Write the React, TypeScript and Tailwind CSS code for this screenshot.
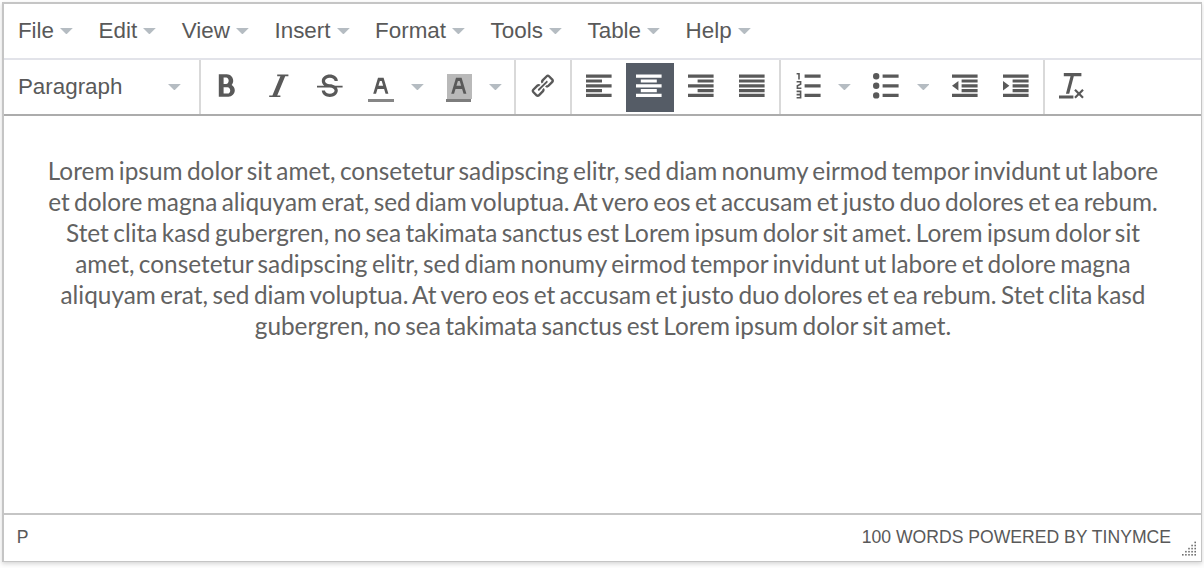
import React from "react";

const paths = {
  bold: "M707.88 475.348c37.498-44.542 60.12-102.008 60.12-164.571 0-141.16-114.842-256-256-256h-320v896h384c141.158 0 256-114.842 256-256 0-92.956-49.798-174.496-124.12-219.429zM384 182.777h101.5c55.968 0 101.5 57.42 101.5 128s-45.532 128-101.5 128h-101.5v-256zM543 823.777h-159v-256h159c58.45 0 106 57.42 106 128s-47.55 128-106 128z",
  italic: "M896 64v64h-128l-320 768h128v64h-448v-64h128l320-768h-128v-64z",
  strike:
    "M1024 512v64h-234.506c27.504 38.51 42.506 82.692 42.506 128 0 70.878-36.66 139.026-100.58 186.964-59.358 44.518-137.284 69.036-219.42 69.036-82.138 0-160.062-24.518-219.42-69.036-63.92-47.938-100.58-116.086-100.58-186.964h128c0 69.382 87.926 128 192 128s192-58.618 192-128c0-69.382-87.926-128-192-128h-512v-64h299.518c-2.338-1.654-4.656-3.324-6.938-5.036-63.92-47.94-100.58-116.086-100.58-186.964s36.66-139.024 100.58-186.964c59.358-44.518 137.282-69.036 219.42-69.036 82.136 0 160.062 24.518 219.42 69.036 63.92 47.94 100.58 116.086 100.58 186.964h-128c0-69.382-87.926-128-192-128s-192 58.618-192 128c0 69.382 87.926 128 192 128 78.978 0 154.054 22.678 212.482 64h299.518z",
  link: "M927.274 230.216l-133.49-133.488c-21.104-21.104-49.232-32.728-79.198-32.728s-58.094 11.624-79.196 32.726l-165.492 165.49c-43.668 43.668-43.668 114.724 0 158.392l2.746 2.746 67.882-67.882-2.746-2.746c-6.132-6.132-6.132-16.494 0-22.626l165.492-165.492c4.010-4.008 8.808-4.608 11.312-4.608s7.302 0.598 11.312 4.61l133.49 133.488c6.132 6.134 6.132 16.498 0.002 22.628l-165.494 165.494c-4.008 4.008-8.806 4.608-11.31 4.608s-7.302-0.6-11.312-4.612l-2.746-2.746-67.88 67.884 2.742 2.742c21.106 21.108 49.23 32.728 79.2 32.728s58.094-11.624 79.196-32.726l165.494-165.492c43.662-43.666 43.662-114.72-0.004-158.39zM551.356 600.644l-67.882 67.882 2.746 2.746c4.008 4.008 4.61 8.806 4.61 11.31 0 2.506-0.598 7.302-4.606 11.314l-165.494 165.49c-4.010 4.010-8.81 4.61-11.314 4.61s-7.304-0.6-11.314-4.61l-133.492-133.486c-4.010-4.010-4.61-8.81-4.61-11.314s0.598-7.3 4.61-11.312l165.49-165.488c4.010-4.012 8.81-4.612 11.314-4.612s7.304 0.6 11.314 4.612l2.746 2.742 67.882-67.88-2.746-2.746c-21.104-21.104-49.23-32.726-79.196-32.726s-58.092 11.624-79.196 32.726l-165.488 165.486c-21.106 21.104-32.73 49.234-32.73 79.198s11.624 58.094 32.726 79.198l133.49 133.49c21.106 21.102 49.232 32.726 79.198 32.726s58.092-11.624 79.196-32.726l165.494-165.492c21.104-21.104 32.722-49.23 32.722-79.196s-11.618-58.094-32.72-79.196l-2.742-2.746zM352 710c-9.724 0-19.45-3.71-26.87-11.128-14.84-14.84-14.84-38.898 0-53.738l320-320c14.84-14.84 38.896-14.84 53.736 0 14.844 14.84 14.844 38.9 0 53.74l-320 320c-7.416 7.416-17.142 11.126-26.866 11.126z",
  color:
    "M322.018 832l57.6-192h264.764l57.6 192h113.632l-191.996-640h-223.236l-192 640h113.636zM475.618 320h72.764l57.6 192h-187.964l57.6-192z",
  left: "M0 64h1024v128h-1024zM0 256h640v128h-640zM0 640h640v128h-640zM0 448h1024v128h-1024zM0 832h1024v128h-1024z",
  center: "M0 64h1024v128h-1024zM192 256h640v128h-640zM192 640h640v128h-640zM0 448h1024v128h-1024zM0 832h1024v128h-1024z",
  right: "M0 64h1024v128h-1024zM384 256h640v128h-640zM384 640h640v128h-640zM0 448h1024v128h-1024zM0 832h1024v128h-1024z",
  justify: "M0 64h1024v128h-1024zM0 256h1024v128h-1024zM0 448h1024v128h-1024zM0 640h1024v128h-1024zM0 832h1024v128h-1024z",
  numbers:
    "M384 832h640v128h-640zM384 448h640v128h-640zM384 64h640v128h-640zM192 0v256h-64v-192h-64v-64zM128 526v50h128v64h-192v-146l128-60v-50h-128v-64h192v146zM256 704v320h-192v-64h128v-64h-128v-64h128v-64h-128v-64z",
  bullets:
    "M384 64h640v128h-640zM384 448h640v128h-640zM384 832h640v128h-640zM0 128a128 128 0 1 0 256 0a128 128 0 1 0-256 0zM0 512a128 128 0 1 0 256 0a128 128 0 1 0-256 0zM0 896a128 128 0 1 0 256 0a128 128 0 1 0-256 0z",
  outdent:
    "M0 64h1024v128h-1024zM384 256h640v128h-640zM384 448h640v128h-640zM384 640h640v128h-640zM0 832h1024v128h-1024zM256 320v384l-256-192z",
  indent:
    "M0 64h1024v128h-1024zM384 256h640v128h-640zM384 448h640v128h-640zM384 640h640v128h-640zM0 832h1024v128h-1024zM0 704v-384l256 192z",
  clear:
    "M0 896h576v128h-576zM192 0h704v128h-704zM277.388 832l204.688-784.164 123.85 32.328-196.25 751.836zM929.774 1024l-129.774-129.774-129.774 129.774-62.226-62.226 129.774-129.774-129.774-129.774 62.226-62.226 129.774 129.774 129.774-129.774 62.226 62.226-129.774 129.774 129.774 129.774z",
};

function Icon({ name, className = "" }: { name: keyof typeof paths; className?: string }) {
  return (
    <svg viewBox="0 0 1024 1024" fill="currentColor" className={`block size-[25.6px] shrink-0 overflow-visible ${className}`}>
      <path d={paths[name]} />
    </svg>
  );
}

function Caret({ className = "" }: { className?: string }) {
  return (
    <svg viewBox="0 0 12.8 6.4" className={`block h-[6.4px] w-[12.8px] shrink-0 fill-[#b5bcc2] ${className}`}>
      <path d="M0 0h12.8L6.4 6.4z" />
    </svg>
  );
}

function Group({ className, children }: { className: string; children: React.ReactNode }) {
  return (
    <div className={`flex shrink-0 items-start border-r-2 border-[#d9d9d9] pt-[13px] ${className}`}>{children}</div>
  );
}

const menus = ["File", "Edit", "View", "Insert", "Format", "Tools", "Table", "Help"];

const lines = [
  "Lorem ipsum dolor sit amet, consetetur sadipscing elitr, sed diam nonumy eirmod tempor invidunt ut labore",
  "et dolore magna aliquyam erat, sed diam voluptua. At vero eos et accusam et justo duo dolores et ea rebum.",
  "Stet clita kasd gubergren, no sea takimata sanctus est Lorem ipsum dolor sit amet. Lorem ipsum dolor sit",
  "amet, consetetur sadipscing elitr, sed diam nonumy eirmod tempor invidunt ut labore et dolore magna",
  "aliquyam erat, sed diam voluptua. At vero eos et accusam et justo duo dolores et ea rebum. Stet clita kasd",
  "gubergren, no sea takimata sanctus est Lorem ipsum dolor sit amet.",
];

const gripRows = [1, 2, 3, 4, 5];

export default function App() {
  return (
    <div className="h-[568px] w-[1204px] overflow-hidden bg-[#fdfdfd] pt-[2px] pl-[2px] font-['Liberation_Sans',sans-serif] text-[#595959]">
      <div className="flex h-[560px] w-[1200px] flex-col border-t-2 border-r border-b border-l-2 border-[#c5c5c5] bg-white shadow-[0_2px_4px_rgba(0,0,0,0.15)]">
        <div className="flex h-[56px] shrink-0 items-center gap-[25.5px] border-b-2 border-[#e2e3e9] pl-[13.9px] text-[22.4px] leading-[26px]">
          {menus.map((m) => (
            <div key={m} className="flex items-center gap-[6.3px]">
              <span>{m}</span>
              <Caret />
            </div>
          ))}
        </div>

        <div className="flex h-[56px] shrink-0 border-b-2 border-[#acacac]">
          <Group className="w-[197px] pl-[13.9px]">
            <span className="w-[150.5px] text-[22.4px] leading-[28px]">Paragraph</span>
            <Caret className="mt-[11px]" />
          </Group>
          <Group className="w-[315px] pl-[13.4px]">
            <Icon name="bold" />
            <Icon name="italic" className="ml-[25.6px]" />
            <Icon name="strike" className="ml-[25.6px]" />
            <div className="ml-[25.6px] flex w-[25.6px] flex-col">
              <Icon name="color" />
              <span className="mt-[0.4px] h-[3px] bg-[#868686]" />
            </div>
            <Caret className="mt-[11px] ml-[17.6px]" />
            <div className="ml-[21.8px] flex w-[26px] flex-col">
              <span className="mt-[1px] ml-[1px] h-[25px] w-[25px] bg-[#b9b9b9]">
                <Icon name="color" className="-mt-[1px] -ml-[1px]" />
              </span>
              <span className="h-[3px] w-[25px] bg-[#7d7d7d]" />
            </div>
            <Caret className="mt-[11px] ml-[17.6px]" />
          </Group>
          <Group className="w-[56px] pl-[13.5px]">
            <Icon name="link" />
          </Group>
          <Group className="w-[209px] pl-[13.5px]">
            <Icon name="left" />
            <span className="-mt-[10px] ml-[14.9px] flex h-[49px] w-[48px] bg-[#555c66] pt-[10px] pl-[10.5px] text-white">
              <Icon name="center" />
            </span>
            <Icon name="right" className="ml-[14px]" />
            <Icon name="justify" className="ml-[25.4px]" />
          </Group>
          <Group className="w-[264px] pl-[14px]">
            <Icon name="numbers" />
            <Caret className="mt-[11px] ml-[17.6px]" />
            <Icon name="bullets" className="ml-[22.4px]" />
            <Caret className="mt-[11px] ml-[17.6px]" />
            <Icon name="outdent" className="ml-[22.4px]" />
            <Icon name="indent" className="ml-[25.6px]" />
          </Group>
          <div className="flex items-start pt-[13px] pl-[14px]">
            <Icon name="clear" />
          </div>
        </div>

        <div className="flex-1 pt-[39px] pl-[1px] text-center font-['Lato',sans-serif] text-[24.35px] leading-[31px] [word-spacing:-1.77px] whitespace-nowrap text-[#626262]">
          {lines.map((l) => (
            <p key={l}>{l}</p>
          ))}
        </div>

        <div className="flex h-[48px] shrink-0 items-start border-t-2 border-[#c5c5c5] pt-[12px] pl-[12.8px] text-[17.6px] leading-[20px]">
          <span>P</span>
          <span className="mr-[9px] ml-auto">100 WORDS POWERED BY TINYMCE</span>
          <svg viewBox="0 0 16 16" className="mt-[12.5px] mr-[5px] block size-[16px] fill-[#707070]">
            {gripRows.map((r) =>
              Array.from({ length: r }, (_, c) => (
                <rect key={`${r}-${c}`} x={14.4 - c * 3.1} y={r * 3.1 - 1.5} width={1.6} height={1.6} />
              )),
            )}
          </svg>
        </div>
      </div>
    </div>
  );
}
